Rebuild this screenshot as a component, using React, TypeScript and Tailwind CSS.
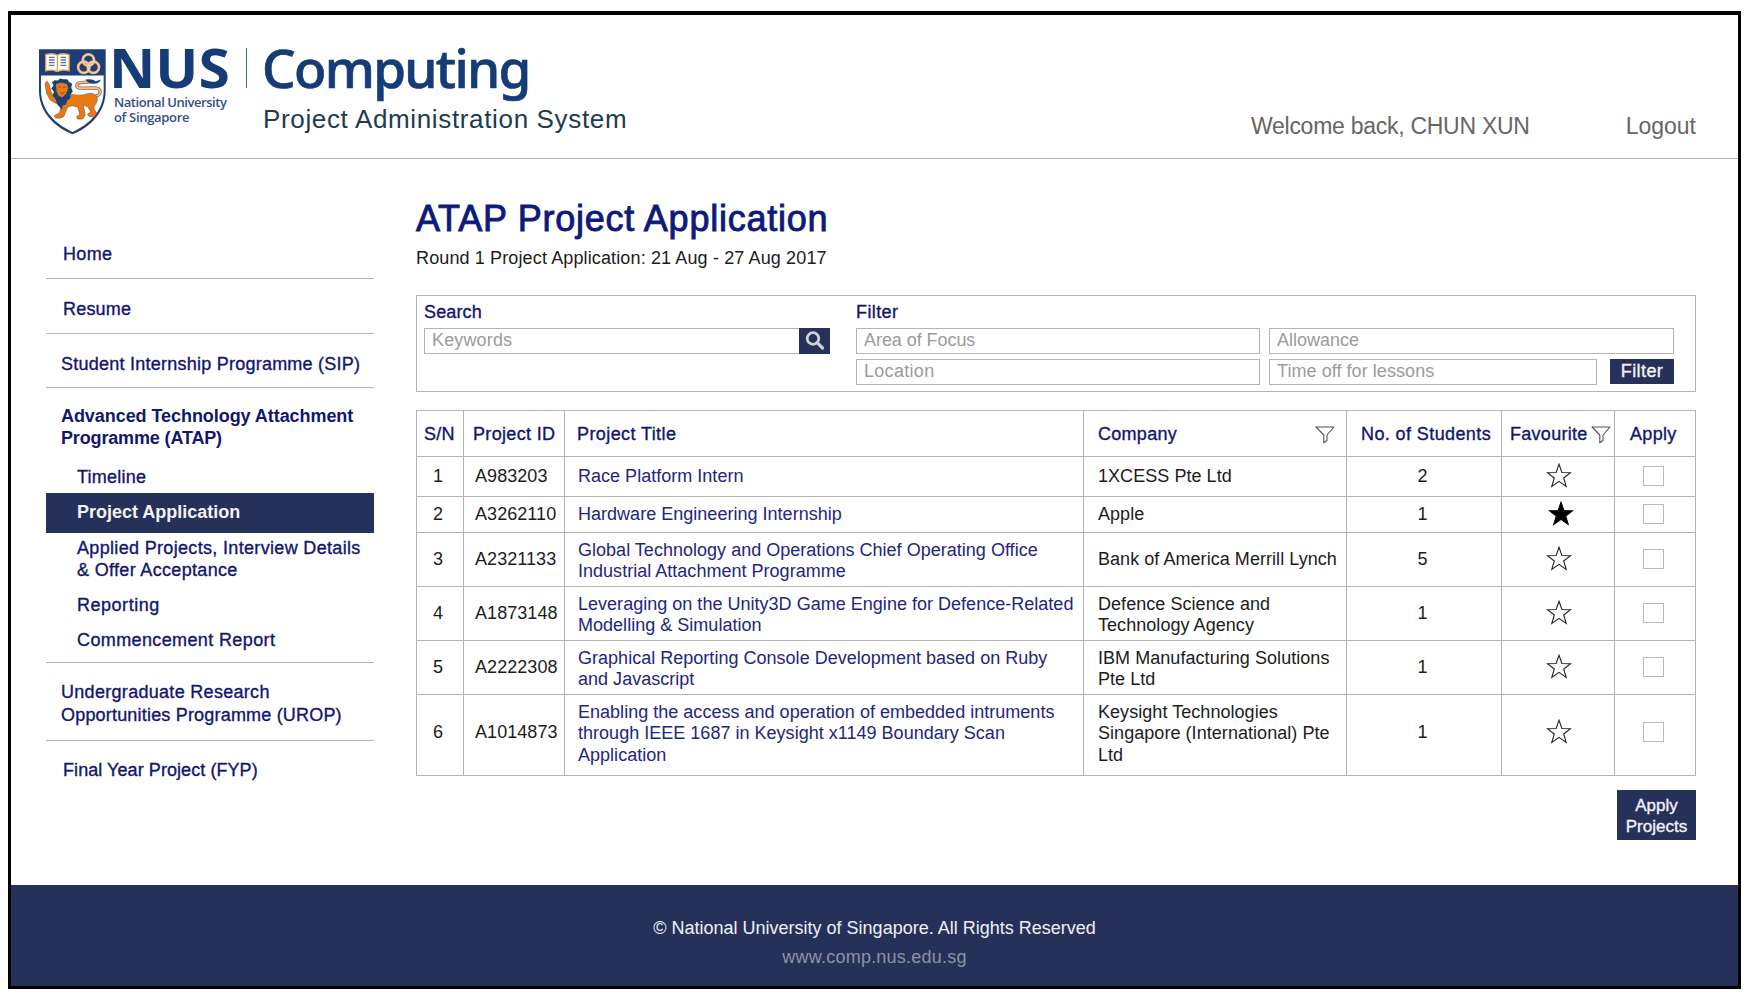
import React from "react";

const line = "border-[#b4b4b4]";
const medium = "[-webkit-text-stroke:0.35px_currentColor]";

function Crest() {
  return (
    <svg viewBox="24 20 208 266" className="h-[89px] w-[69px]" aria-hidden="true">
      <path d="M27 26H228V150C228 216 182 260 128 282C74 260 27 216 27 150Z" fill="#1c3f78" />
      <path d="M33 105H222V150C222 212 178 252 128 275C78 252 33 212 33 150Z" fill="#fff" />
      <path d="M47 42Q66 36 82 43Q98 36 118 42V91Q98 86 87 92H78Q66 86 47 91Z" fill="#fff" stroke="#e9963f" strokeWidth="4" />
      <path d="M82.500 44V90" stroke="#e9963f" strokeWidth="4" />
      <path d="M57 50H74M57 58H74M57 66H74M57 74H74M92 50H109M92 58H109M92 66H109M92 74H109" stroke="#5b6f9b" strokeWidth="4" />
      <g fill="none" stroke="#f3b478" strokeWidth="8">
        <circle cx="176" cy="58" r="17" />
        <circle cx="162" cy="80" r="17" />
        <circle cx="191" cy="80" r="17" />
      </g>
      <g fill="none" stroke="#fbe3c9" strokeWidth="2">
        <circle cx="176" cy="58" r="17" />
        <circle cx="162" cy="80" r="17" />
        <circle cx="191" cy="80" r="17" />
      </g>
      <path
        d="M192 168C218 166 216 142 196 142L156 143C136 144 136 127 154 126L180 124"
        fill="none"
        stroke="#8a6a55"
        strokeWidth="10"
        strokeLinecap="round"
      />
      <path
        d="M192 168C218 166 216 142 196 142L156 143C136 144 136 127 154 126L180 124"
        fill="none"
        stroke="#f6c08c"
        strokeWidth="5"
        strokeLinecap="round"
      />
      <path d="M167 117Q188 113 198 122L214 117Q208 130 190 130Q176 130 167 117Z" fill="#1c3f78" />
      <path
        d="M45 128L52 122L58 132L62 150L70 168L90 178L112 162C130 160 150 168 168 161C190 152 206 166 202 182C198 194 190 198 194 208L201 218L195 228H178L173 222L183 214L174 199L160 194L164 210L166 226L158 236H143L140 229L150 222L144 200L128 196L114 199L108 212L102 228L92 233H76L74 225L88 218L94 200L80 190L60 178L50 158Z"
        fill="#e87a14"
        stroke="#8a5a35"
        strokeWidth="2"
      />
      <path
        d="M74 119L84 120L90 114L100 116L112 116L118 124L127 130L124 142L129 152L122 162L121 174L112 180L108 192L98 196L96 208L86 196L80 186L76 174L68 166L72 154L64 144L71 134L66 126Z"
        fill="#1c3f78"
      />
      <path d="M78 131L94 126L112 131L115 145L109 159L98 170L87 167L80 153Z" fill="#e87a14" />
      <path d="M86 140H93M100 140H107M93 156L99 159L104 154" stroke="#8a4a20" strokeWidth="3" fill="none" />
    </svg>
  );
}

function Funnel() {
  return (
    <svg viewBox="0 0 20 18" className="h-[18px] w-5 shrink-0" fill="none" stroke="#555" strokeWidth="1.1">
      <path d="M1 1H19L12 9V14.500L8.800 16.800V9Z" strokeLinejoin="round" />
    </svg>
  );
}

function Star({ filled = false }: { filled?: boolean }) {
  return (
    <svg viewBox="0 0 26 25" className={filled ? "mb-[2px] ml-[5px] h-[25px] w-[26px]" : "mb-[2px] ml-[2px] h-[25px] w-[26px]"}>
      <path
        d="M13 1.300L15.900 9.500L24.600 9.700L17.700 15L20.200 23.400L13 18.400L5.800 23.400L8.300 15L1.400 9.700L10.100 9.500Z"
        fill={filled ? "#000" : "none"}
        stroke={filled ? "#000" : "#222"}
        strokeWidth="1.1"
      />
    </svg>
  );
}

function Header() {
  return (
    <header className={`flex h-[144px] border-b pl-[27px] pr-[42px] ${line}`}>
      <div className="pt-8">
        <Crest />
      </div>
      <div className="ml-[5px] w-[134px] pt-[26px] font-['Open_Sans',sans-serif] text-[#163c77]">
        <div className="-ml-[3px] w-fit origin-left scale-x-[1.065] text-[53.500px] leading-[54px] font-bold">NUS</div>
        <div className="ml-[2px] text-[13px] leading-[15px] font-semibold text-[#31507f]">
          <div className="tracking-[-0.440px]">National University</div>
          <div className="tracking-[-0.310px]">of Singapore</div>
        </div>
      </div>
      <div className="mt-[33px] h-[40px] w-px bg-[#4a6390]" />
      <div className="ml-[15px] pt-[21px]">
        <div className="font-['Noto_Sans',sans-serif] text-[53px] leading-[64px] font-medium tracking-[-1.700px] text-[#163c77] [-webkit-text-stroke:0.7px_currentColor]">
          Computing
        </div>
        <div className="ml-[1px] mt-[4px] text-[26px] leading-[30px] tracking-[0.650px] text-[#1d3c50]">
          Project Administration System
        </div>
      </div>
      <div className="ml-auto flex gap-[96px] pt-[97px] text-[23px] leading-[28px] text-[#666]">
        <span className="tracking-[-0.270px]">Welcome back, CHUN XUN</span>
        <span>Logout</span>
      </div>
    </header>
  );
}

function Sidebar() {
  return (
    <nav className={`mt-[83px] w-[328px] shrink-0 leading-[22px] text-[#13166f] ${medium}`}>
      <div className={`h-[37px] border-b pl-[17px] pt-px tracking-[0.350px] ${line}`}>Home</div>
      <div className={`h-[55px] border-b pl-[17px] pt-[19px] tracking-[0.200px] ${line}`}>Resume</div>
      <div className={`h-[54px] border-b pl-[15px] pt-[19px] tracking-[0.240px] ${line}`}>
        Student Internship Programme (SIP)
      </div>
      <div className="pl-[15px] pt-[17px] font-bold [-webkit-text-stroke:0]">
        <div className="tracking-[-0.060px]">Advanced Technology Attachment</div>
        <div className="tracking-[-0.150px]">Programme (ATAP)</div>
      </div>
      <div className={`border-b pb-[11px] ${line}`}>
        <div className="pl-[31px] pt-[17px] tracking-[0.240px]">Timeline</div>
        <div className="mt-[5px] flex h-[40px] items-center bg-[#263159] pb-[2px] pl-[31px] font-bold text-[#f2f3f8] [-webkit-text-stroke:0]">
          Project Application
        </div>
        <div className="pl-[31px] pt-[4px] tracking-[0.330px]">
          Applied Projects, Interview Details
          <br />
          &amp; Offer Acceptance
        </div>
        <div className="pl-[31px] pt-[13px] tracking-[0.520px]">Reporting</div>
        <div className="pl-[31px] pt-[13px] tracking-[0.380px]">Commencement Report</div>
      </div>
      <div className={`h-[78px] border-b pl-[15px] pt-[18px] leading-[23px] ${line}`}>
        <div className="tracking-[0.300px]">Undergraduate Research</div>
        <div className="tracking-[0.190px]">Opportunities Programme (UROP)</div>
      </div>
      <div className="pl-[17px] pt-[18px] tracking-[0.070px]">Final Year Project (FYP)</div>
    </nav>
  );
}

function Field({ label, className }: { label: string; className: string }) {
  return (
    <div className={`flex h-[26px] items-center border pb-[2px] pl-[7px] text-[#9b9b9b] ${line} ${className}`}>
      {label}
    </div>
  );
}

function SearchPanel() {
  return (
    <section className={`mt-[25px] flex h-[97px] border pl-[7px] pt-[5px] ${line}`}>
      <div className="w-[406px]">
        <div className={`leading-[22px] tracking-[0.140px] text-[#13166f] ${medium}`}>Search</div>
        <div className="mt-[5px] flex">
          <Field label="Keywords" className="grow border-r-0 tracking-[0.150px]" />
          <div className="flex h-[26px] w-[31px] items-center justify-center bg-[#263159]">
            <svg viewBox="0 0 20 20" className="size-5" fill="none" stroke="#ccd0dc">
              <circle cx="8" cy="7.500" r="5.800" strokeWidth="2.800" />
              <path d="M12.200 11.700L17.500 17" strokeWidth="3.200" strokeLinecap="round" />
            </svg>
          </div>
        </div>
      </div>
      <div className="ml-[26px] w-[818px]">
        <div className={`leading-[22px] tracking-[0.400px] text-[#13166f] ${medium}`}>Filter</div>
        <div className="mt-[5px] flex gap-[9px]">
          <Field label="Area of Focus" className="w-[404px] tracking-[-0.060px]" />
          <Field label="Allowance" className="w-[405px]" />
        </div>
        <div className="mt-[5px] flex">
          <Field label="Location" className="w-[404px] tracking-[0.300px]" />
          <Field label="Time off for lessons" className="ml-[9px] w-[328px] tracking-[0.060px]" />
          <div className={`ml-[13px] flex h-[25px] w-[64px] items-center justify-center bg-[#263159] tracking-[0.400px] text-[#f2f3f8] ${medium}`}>
            Filter
          </div>
        </div>
      </div>
    </section>
  );
}

type Project = {
  id: string;
  title: string[];
  company: string[];
  students: number;
  favourite?: boolean;
};

const projects: Project[] = [
  { id: "A983203", title: ["Race Platform Intern"], company: ["1XCESS Pte Ltd"], students: 2 },
  { id: "A3262110", title: ["Hardware Engineering Internship"], company: ["Apple"], students: 1, favourite: true },
  {
    id: "A2321133",
    title: ["Global Technology and Operations Chief Operating Office", "Industrial Attachment Programme"],
    company: ["Bank of America Merrill Lynch"],
    students: 5,
  },
  {
    id: "A1873148",
    title: ["Leveraging on the Unity3D Game Engine for Defence-Related", "Modelling & Simulation"],
    company: ["Defence Science and", "Technology Agency"],
    students: 1,
  },
  {
    id: "A2222308",
    title: ["Graphical Reporting Console Development based on Ruby", "and Javascript"],
    company: ["IBM Manufacturing Solutions", "Pte Ltd"],
    students: 1,
  },
  {
    id: "A1014873",
    title: [
      "Enabling the access and operation of embedded intruments",
      "through IEEE 1687 in Keysight x1149 Boundary Scan",
      "Application",
    ],
    company: ["Keysight Technologies", "Singapore (International) Pte", "Ltd"],
    students: 1,
  },
];

const cell = `flex items-center border-l border-t ${line}`;
const headCell = `${cell} pt-[3px] text-[#13166f] ${medium}`;

function Lines({ lines }: { lines: string[] }) {
  return (
    <div className={lines.length > 1 ? "pt-[3px]" : ""}>
      {lines.map((t) => (
        <div key={t}>{t}</div>
      ))}
    </div>
  );
}

function ProjectTable() {
  return (
    <section
      className={`mt-[18px] grid grid-cols-[47px_101px_519px_263px_155px_113px_81px] grid-rows-[46px_40px_36px_54px_54px_54px_81px] border-b border-r leading-[21.500px] ${line}`}
    >
      <div className={`${headCell} pl-[7px] tracking-[0.300px]`}>S/N</div>
      <div className={`${headCell} pl-[9px] tracking-[0.330px]`}>Project ID</div>
      <div className={`${headCell} pl-[12px] tracking-[0.410px]`}>Project Title</div>
      <div className={`${headCell} justify-between pl-[14px] pr-[11px] tracking-[0.280px]`}>
        Company
        <Funnel />
      </div>
      <div className={`${headCell} pl-[14px] tracking-[0.400px]`}>No. of Students</div>
      <div className={`${headCell} justify-between pl-[8px] pr-[3px] tracking-[0.280px]`}>
        Favourite
        <Funnel />
      </div>
      <div className={`${headCell} pl-[15px] tracking-[0.320px]`}>Apply</div>
      {projects.map((p, i) => {
        const pad = i === projects.length - 1 ? "pb-[5px]" : "";
        return (
          <React.Fragment key={p.id}>
            <div className={`${cell} ${pad} pl-[16px]`}>{i + 1}</div>
            <div className={`${cell} ${pad} pl-[11px] tracking-[0.060px]`}>{p.id}</div>
            <div className={`${cell} ${pad} whitespace-nowrap pl-[13px] tracking-[0.020px] text-[#23267e]`}>
              <Lines lines={p.title} />
            </div>
            <div className={`${cell} ${pad} whitespace-nowrap pl-[14px] tracking-[0.050px]`}>
              <Lines lines={p.company} />
            </div>
            <div className={`${cell} ${pad} justify-center pr-[3px] pt-px`}>{p.students}</div>
            <div className={`${cell} ${pad} justify-center`}>
              <Star filled={p.favourite} />
            </div>
            <div className={`${cell} ${pad} pl-[28px]`}>
              <div className="mb-[2px] h-5 w-[21px] border border-[#b9b9b9]" />
            </div>
          </React.Fragment>
        );
      })}
    </section>
  );
}

export default function App() {
  return (
    <div className="h-[1002px] w-[1750px] bg-white pl-2 pt-[11px] font-['Liberation_Sans',Arial,sans-serif] text-[18px] text-[#1c1c1c]">
      <div className="flex h-[978px] w-[1733px] flex-col border-[3px] border-t-4 border-black">
        <Header />
        <div className="flex grow pl-[35px] pr-[42px]">
          <Sidebar />
          <main className="ml-[42px] w-[1280px]">
            <h1 className="mt-[39px] text-[36px] leading-[42px] tracking-[0.750px] text-[#0e1a7b] [-webkit-text-stroke:0.9px_currentColor]">
              ATAP Project Application
            </h1>
            <p className="mt-[7px] pb-px leading-[22px] tracking-[0.130px]">Round 1 Project Application: 21 Aug - 27 Aug 2017</p>
            <SearchPanel />
            <ProjectTable />
            <div className={`ml-auto mt-[14px] flex h-[50px] w-[79px] flex-col items-center justify-center bg-[#263159] pt-px text-[17px] leading-[21px] text-[#f2f3f8] ${medium}`}>
              <span>Apply</span>
              <span>Projects</span>
            </div>
          </main>
        </div>
        <footer className="flex h-[101px] shrink-0 flex-col items-center bg-[#263159] pt-[32px] leading-[22px]">
          <p className="text-[#eef0f6]">© National University of Singapore. All Rights Reserved</p>
          <p className="mt-[7px] tracking-[0.220px] text-[#8f92a3]">www.comp.nus.edu.sg</p>
        </footer>
      </div>
    </div>
  );
}
